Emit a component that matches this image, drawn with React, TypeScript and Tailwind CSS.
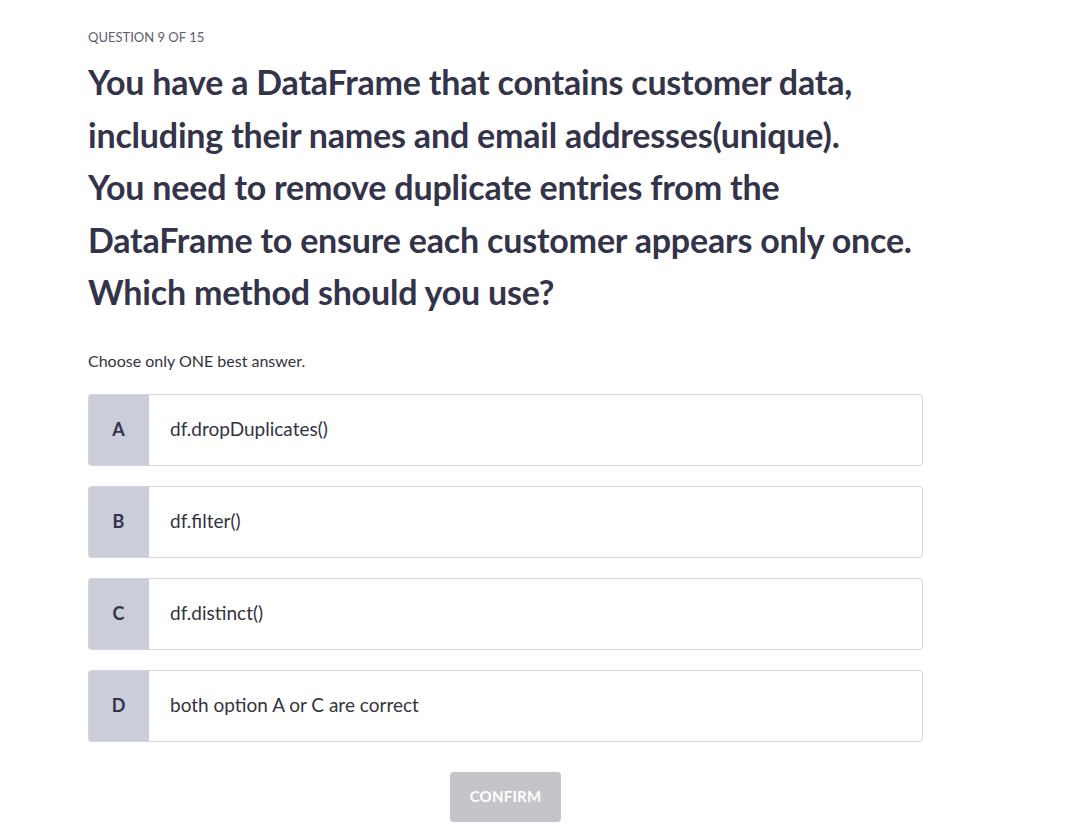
const options = [
  { key: "A", text: "df.dropDuplicates()" },
  { key: "B", text: "df.filter()" },
  { key: "C", text: "df.distinct()" },
  { key: "D", text: "both option A or C are correct" },
];

export default function App() {
  return (
    <div
      className="min-h-screen bg-white text-[#333344]"
      style={{ fontFamily: "Lato, 'Open Sans', sans-serif" }}
    >
      <div className="pl-[88px] pt-[29px] w-[923px]">
        <div className="text-[13px] leading-[16px] text-[#5c5e6c]">QUESTION 9 OF 15</div>

        <h1 className="mt-[11px] text-[34px] leading-[52.5px] font-bold text-[#33334a] tracking-[-0.2px]">
          You have a DataFrame that contains customer data,
          <br />
          including their names and email addresses(unique).
          <br />
          You need to remove duplicate entries from the
          <br />
          DataFrame to ensure each customer appears only once.
          <br />
          Which method should you use?
        </h1>

        <p className="mt-[32px] text-[16px] leading-[20px] text-[#333340]">Choose only ONE best answer.</p>

        <div className="mt-[23px] flex flex-col gap-[20px]">
          {options.map((o) => (
            <div
              key={o.key}
              className="flex h-[72px] rounded-[3px] border border-[#d6d6de] overflow-hidden bg-white"
            >
              <div className="w-[61px] -my-px -ml-px bg-[#cbcdd8] flex items-center justify-center text-[18px] font-bold text-[#33334a]">
                {o.key}
              </div>
              <div className="flex items-center pl-[21px] text-[19px] text-[#333340]">{o.text}</div>
            </div>
          ))}
        </div>

        <div className="mt-[30px] flex justify-center">
          <button className="w-[111px] h-[50px] rounded-[4px] bg-[#c4c5cb] text-white text-[15px] font-bold tracking-[0.2px]">
            CONFIRM
          </button>
        </div>
      </div>
    </div>
  );
}
